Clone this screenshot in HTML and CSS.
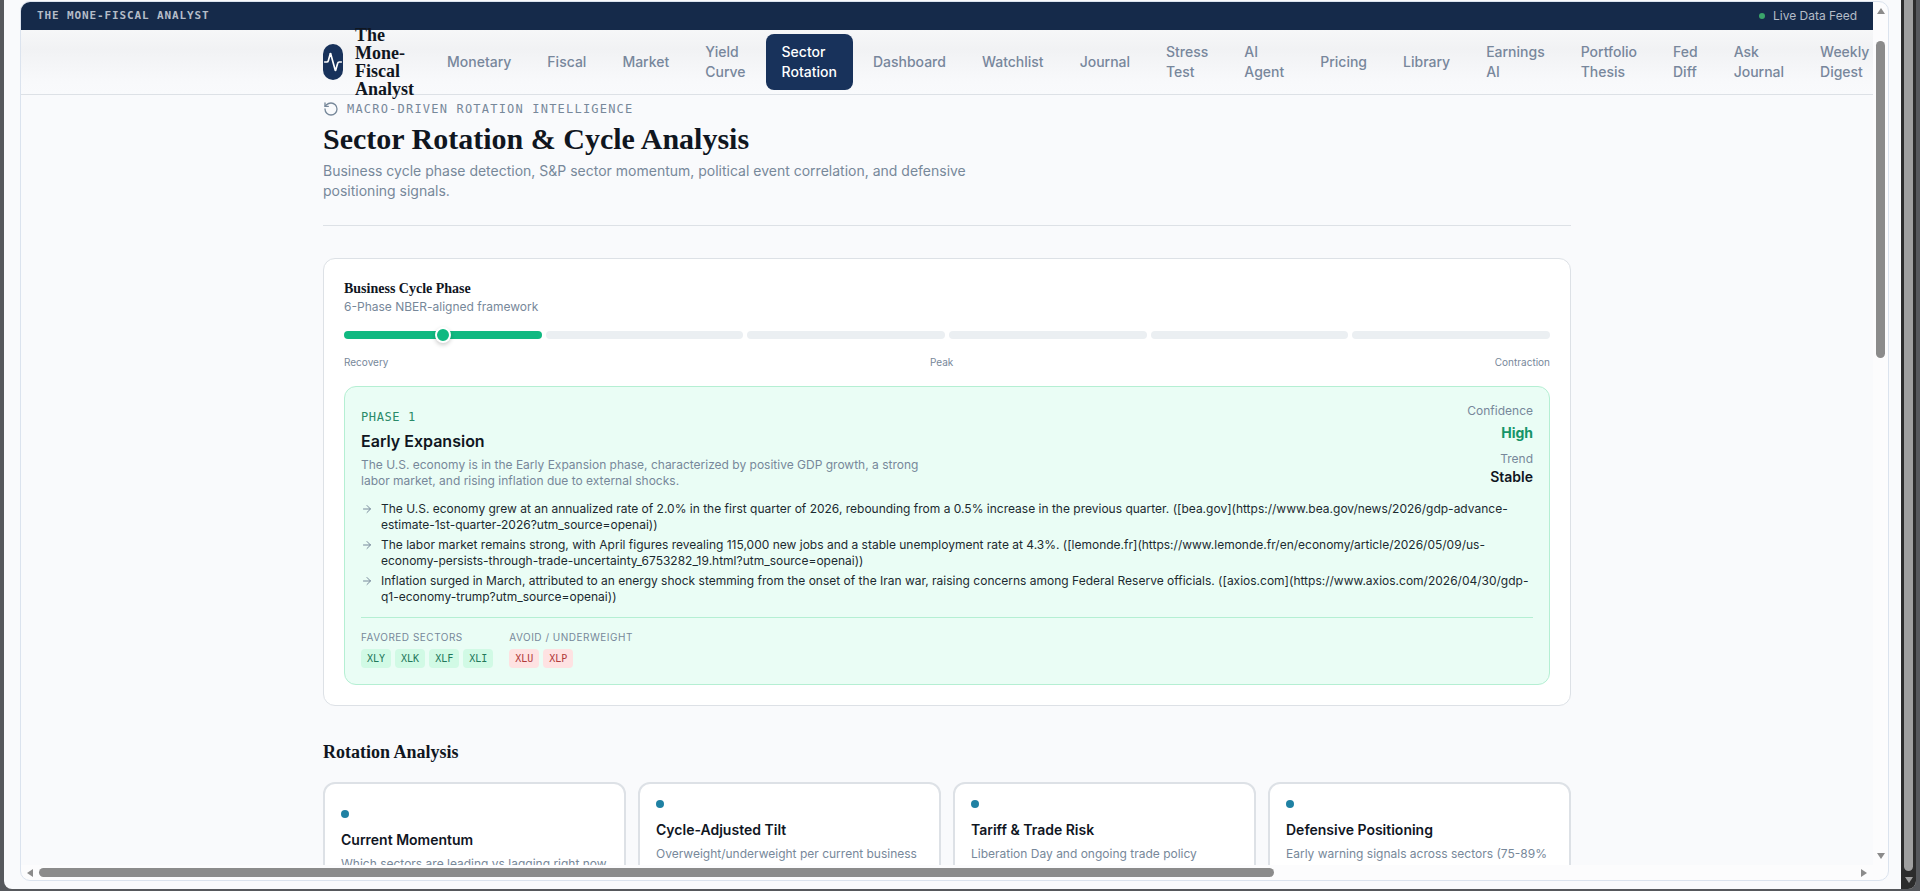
FILE: index.html
```html
<!DOCTYPE html>
<html lang="en">
<head>
    <meta charset="UTF-8">
    <meta name="viewport" content="width=device-width, initial-scale=1.0">
    <title>Sector Rotation - The Mone-Fiscal Analyst</title>
    <link rel="stylesheet" href="styles.css">
</head>
<body>
    <div class="window">
        <div class="frame">
            <div class="view">
                <div class="topbar">
                    <span class="topbar-name">THE MONE-FISCAL ANALYST</span>
                    <span class="live"><i class="live-dot"></i>Live Data Feed</span>
                </div>

                <header class="header">
                    <div class="header-inner">
                        <a href="#" class="brand">
                            <span class="logo">
                                <svg viewBox="0 0 24 24" width="20" height="20" fill="none" stroke="#fff" stroke-width="2" stroke-linecap="round" stroke-linejoin="round"><path d="M22 12h-2.5a2 2 0 0 0-1.9 1.5l-2.4 8.3a.25.25 0 0 1-.5 0L9.200 2.200a.25.25 0 0 0-.5 0l-2.300 8.300A2 2 0 0 1 4.500 12H2"/></svg>
                            </span>
                            <span class="brand-name">The Mone-Fiscal Analyst</span>
                        </a>
                        <nav class="nav">
                            <a href="#">Monetary</a>
                            <a href="#">Fiscal</a>
                            <a href="#">Market</a>
                            <a href="#">Yield Curve</a>
                            <a href="#" class="active">Sector Rotation</a>
                            <a href="#">Dashboard</a>
                            <a href="#">Watchlist</a>
                            <a href="#">Journal</a>
                            <a href="#">Stress Test</a>
                            <a href="#">AI Agent</a>
                            <a href="#">Pricing</a>
                            <a href="#">Library</a>
                            <a href="#">Earnings AI</a>
                            <a href="#">Portfolio Thesis</a>
                            <a href="#">Fed Diff</a>
                            <a href="#">Ask Journal</a>
                            <a href="#">Weekly Digest</a>
                        </nav>
                    </div>
                </header>

                <main class="container">
                    <section class="intro">
                        <div class="eyebrow">
                            <svg viewBox="0 0 24 24" width="16" height="16" fill="none" stroke="currentColor" stroke-width="2" stroke-linecap="round" stroke-linejoin="round"><path d="M3 12a9 9 0 1 0 9-9 9.750 9.750 0 0 0-6.740 2.740L3 8"/><path d="M3 3v5h5"/></svg>
                            <span>MACRO-DRIVEN ROTATION INTELLIGENCE</span>
                        </div>
                        <h1>Sector Rotation &amp; Cycle Analysis</h1>
                        <p>Business cycle phase detection, S&amp;P sector momentum, political event correlation, and defensive positioning signals.</p>
                    </section>

                    <section class="card">
                        <h2 class="card-title">Business Cycle Phase</h2>
                        <p class="card-sub">6-Phase NBER-aligned framework</p>

                        <div class="track">
                            <div class="step on"><span class="marker"></span></div>
                            <div class="step"></div>
                            <div class="step"></div>
                            <div class="step"></div>
                            <div class="step"></div>
                            <div class="step"></div>
                        </div>
                        <div class="track-labels">
                            <span>Recovery</span>
                            <span>Peak</span>
                            <span>Contraction</span>
                        </div>

                        <div class="phase">
                            <div class="phase-head">
                                <div class="phase-info">
                                    <div class="phase-num">PHASE 1</div>
                                    <h3>Early Expansion</h3>
                                    <p>The U.S. economy is in the Early Expansion phase, characterized by positive GDP growth, a strong labor market, and rising inflation due to external shocks.</p>
                                </div>
                                <dl class="phase-stats">
                                    <dt>Confidence</dt>
                                    <dd class="high">High</dd>
                                    <dt>Trend</dt>
                                    <dd>Stable</dd>
                                </dl>
                            </div>

                            <ul class="points">
                                <li>
                                    <svg viewBox="0 0 12 12" width="12" height="16" fill="none" stroke="currentColor" stroke-linecap="round" stroke-linejoin="round"><path d="M2.500 6h7M6 2.500L9.500 6 6 9.500"/></svg>
                                    <span>The U.S. economy grew at an annualized rate of 2.0% in the first quarter of 2026, rebounding from a 0.5% increase in the previous quarter. ([bea.gov](https://www.bea.gov/news/2026/gdp-advance-estimate-1st-quarter-2026?utm_source=openai))</span>
                                </li>
                                <li>
                                    <svg viewBox="0 0 12 12" width="12" height="16" fill="none" stroke="currentColor" stroke-linecap="round" stroke-linejoin="round"><path d="M2.500 6h7M6 2.500L9.500 6 6 9.500"/></svg>
                                    <span>The labor market remains strong, with April figures revealing 115,000 new jobs and a stable unemployment rate at 4.3%. ([lemonde.fr](https://www.lemonde.fr/en/economy/article/2026/05/09/us-economy-persists-through-trade-uncertainty_6753282_19.html?utm_source=openai))</span>
                                </li>
                                <li>
                                    <svg viewBox="0 0 12 12" width="12" height="16" fill="none" stroke="currentColor" stroke-linecap="round" stroke-linejoin="round"><path d="M2.500 6h7M6 2.500L9.500 6 6 9.500"/></svg>
                                    <span>Inflation surged in March, attributed to an energy shock stemming from the onset of the Iran war, raising concerns among Federal Reserve officials. ([axios.com](https://www.axios.com/2026/04/30/gdp-q1-economy-trump?utm_source=openai))</span>
                                </li>
                            </ul>

                            <div class="sectors">
                                <div>
                                    <div class="sectors-label">FAVORED SECTORS</div>
                                    <div class="chips good">
                                        <span>XLY</span>
                                        <span>XLK</span>
                                        <span>XLF</span>
                                        <span>XLI</span>
                                    </div>
                                </div>
                                <div>
                                    <div class="sectors-label">AVOID / UNDERWEIGHT</div>
                                    <div class="chips bad">
                                        <span>XLU</span>
                                        <span>XLP</span>
                                    </div>
                                </div>
                            </div>
                        </div>
                    </section>

                    <h2 class="section-title">Rotation Analysis</h2>
                    <div class="options">
                        <button type="button" class="option">
                            <span class="dot"></span>
                            <strong>Current Momentum</strong>
                            <span class="desc">Which sectors are leading vs lagging right now</span>
                        </button>
                        <button type="button" class="option">
                            <span class="dot"></span>
                            <strong>Cycle-Adjusted Tilt</strong>
                            <span class="desc two-lines">Overweight/underweight per current business</span>
                        </button>
                        <button type="button" class="option">
                            <span class="dot"></span>
                            <strong>Tariff &amp; Trade Risk</strong>
                            <span class="desc two-lines">Liberation Day and ongoing trade policy</span>
                        </button>
                        <button type="button" class="option">
                            <span class="dot"></span>
                            <strong>Defensive Positioning</strong>
                            <span class="desc two-lines">Early warning signals across sectors (75-89%</span>
                        </button>
                    </div>
                </main>
            </div>

            <div class="vbar">
                <i class="arrow up"></i>
                <div class="vbar-track"><div class="vbar-thumb"></div></div>
                <i class="arrow down"></i>
            </div>
            <div class="hbar">
                <i class="arrow left"></i>
                <div class="hbar-track"><div class="hbar-thumb"></div></div>
                <i class="arrow right"></i>
            </div>
        </div>
        <div class="outer-bar">
            <div class="outer-thumb"></div>
            <i class="arrow down"></i>
        </div>
    </div>
</body>
</html>
```
FILE: styles.css
```css
:root {
    --navy: #152a4a;
    --navy-light: #18325b;
    --page: #f9fafc;
    --text: #10161f;
    --muted: #77889a;
    --line: #dde1e6;
    --green: #10b981;
    --sans: Inter, "Liberation Sans", sans-serif;
    --serif: "Liberation Serif", serif;
    --mono: "DejaVu Sans Mono", "Liberation Mono", monospace;
}
* {
    box-sizing: border-box;
}
body {
    margin: 0;
    height: 100vh;
    padding: 0 4px 2px;
    background: #56585c;
    font-family: var(--sans);
    font-size: 14px;
    line-height: 20px;
    color: var(--text);
    overflow: hidden;
}
h1, h2, h3, p, ul, dl, dd {
    margin: 0;
    padding: 0;
}
a {
    color: inherit;
    text-decoration: none;
}

/* window and scrollbars */
.window {
    display: flex;
    height: 100%;
    background: var(--page);
    border-radius: 0 0 8px 8px;
    overflow: hidden;
}
.frame {
    flex: 1;
    min-width: 0;
    display: grid;
    grid-template-columns: minmax(0, 1fr) 15px;
    grid-template-rows: minmax(0, 1fr) 15px;
    margin: 1px 12px 8px 16px;
    border: 1px solid #dbe3ee;
    border-radius: 10px;
    background: #fcfcfd;
    overflow: hidden;
}
.view {
    background: var(--page);
    overflow: hidden;
}
.vbar {
    display: flex;
    flex-direction: column;
    align-items: center;
    padding: 6px 0;
}
.vbar-track {
    flex: 1;
    width: 9px;
    padding: 27px 0 0;
}
.vbar-thumb {
    height: 39%;
    border-radius: 5px;
    background: #8b8b8b;
}
.hbar {
    display: flex;
    align-items: center;
    padding: 0 6px;
}
.hbar-track {
    flex: 1;
    height: 9px;
    padding: 0 6px;
}
.hbar-thumb {
    width: 68%;
    height: 9px;
    border-radius: 5px;
    background: #8b8b8b;
}
.outer-bar {
    width: 15px;
    display: flex;
    flex-direction: column;
    align-items: center;
    gap: 6px;
    padding-bottom: 6px;
    background: #2c2c2c;
}
.outer-bar .arrow {
    color: #9f9f9f;
}
.outer-thumb {
    flex: 1;
    width: 9px;
    border-radius: 0 0 5px 5px;
    background: #9f9f9f;
}
.arrow {
    color: #8b8b8b;
    border: 4px solid transparent;
}
.arrow.up {
    border-top: 0;
    border-bottom: 6px solid;
}
.arrow.down {
    border-bottom: 0;
    border-top: 6px solid;
}
.arrow.left {
    border-left: 0;
    border-right: 6px solid;
}
.arrow.right {
    border-right: 0;
    border-left: 6px solid;
}

/* top bar */
.topbar {
    display: flex;
    justify-content: space-between;
    align-items: center;
    height: 28px;
    padding: 0 16px;
    background: var(--navy);
    color: #b4bcc8;
    font-size: 12px;
}
.topbar-name {
    font-family: var(--mono);
    font-size: 11px;
    font-weight: bold;
    letter-spacing: 0.08em;
}
.live {
    display: flex;
    align-items: center;
    gap: 8px;
}
.live-dot {
    width: 6px;
    height: 6px;
    border-radius: 50%;
    background: #3aa56b;
}

/* header */
.header {
    height: 65px;
    border-bottom: 1px solid var(--line);
    background: linear-gradient(#f6f7f8, #f1f2f4 30%, #f8f9fb 80%, var(--page));
}
.header-inner {
    display: flex;
    align-items: center;
    gap: 16px;
    height: 64px;
    max-width: 1280px;
    margin: 0 auto;
    padding: 0 16px;
}
.brand {
    flex: none;
    width: 92px;
    display: flex;
    align-items: center;
    gap: 12px;
}
.logo {
    flex: none;
    width: 20px;
    height: 36px;
    display: flex;
    align-items: center;
    border-radius: 10px;
    background: var(--navy-light);
}
.brand-name {
    font-family: var(--serif);
    font-size: 18px;
    line-height: 18px;
    font-weight: bold;
}
.nav {
    flex: none;
    display: flex;
    align-items: center;
    gap: 4px;
}
.nav a {
    width: min-content;
    padding: 8px 16px;
    border-radius: 8px;
    color: #78879c;
    font-weight: 500;
}
.nav a.active {
    background: var(--navy-light);
    color: #fff;
}

/* page intro */
.container {
    max-width: 1280px;
    margin: 0 auto;
    padding: 6px 16px 32px;
}
.intro {
    padding-bottom: 24px;
    border-bottom: 1px solid var(--line);
    margin-bottom: 32px;
}
.eyebrow {
    display: flex;
    align-items: center;
    gap: 8px;
    color: var(--muted);
    font-family: var(--mono);
    font-size: 12px;
    line-height: 16px;
    letter-spacing: 0.1em;
}
.intro h1 {
    margin: 4px 0;
    font-family: var(--serif);
    font-size: 30px;
    line-height: 36px;
}
.intro p {
    max-width: 672px;
    color: var(--muted);
}

/* cycle card */
.card {
    padding: 20px;
    border: 1px solid var(--line);
    border-radius: 12px;
    background: #fff;
}
.card-title {
    font-family: var(--serif);
    font-size: 14px;
    line-height: 20px;
}
.card-sub {
    color: var(--muted);
    font-size: 12px;
    line-height: 16px;
}
.track {
    display: flex;
    gap: 4px;
    margin: 16px 0;
}
.step {
    flex: 1;
    height: 8px;
    border-radius: 4px;
    background: #ebeff2;
}
.step.on {
    display: flex;
    align-items: center;
    justify-content: center;
    background: var(--green);
}
.marker {
    flex: none;
    width: 16px;
    height: 16px;
    border: 2px solid #fff;
    border-radius: 50%;
    background: var(--green);
    box-shadow: 0 2px 4px rgba(0, 0, 0, 0.2);
}
.track-labels {
    display: flex;
    justify-content: space-between;
    margin-bottom: 16px;
    color: var(--muted);
    font-size: 10px;
    line-height: 15px;
}

.phase {
    padding: 16px;
    border: 1px solid #b5efd3;
    border-radius: 12px;
    background: #eafdf5;
}
.phase-head {
    display: flex;
    justify-content: space-between;
    margin-bottom: 12px;
    font-size: 12px;
    line-height: 16px;
}
.phase-info {
    padding-top: 6px;
}
.phase-num {
    color: #2b8a68;
    font-family: var(--mono);
    letter-spacing: 0.05em;
}
.phase-info h3 {
    margin: 4px 0;
    font-size: 16px;
    line-height: 24px;
    font-weight: 600;
}
.phase-info p {
    max-width: 576px;
    color: var(--muted);
}
.phase-stats {
    text-align: right;
}
.phase-stats dt {
    color: var(--muted);
}
.phase-stats dd {
    font-size: 14px;
    line-height: 20px;
    font-weight: 600;
}
.phase-stats .high {
    margin: 4px 0 8px;
    color: #169468;
    font-weight: 700;
}
.points {
    display: flex;
    flex-direction: column;
    gap: 4px;
    list-style: none;
    font-size: 12px;
    line-height: 16px;
    color: #1c2a30;
}
.points li {
    display: flex;
    gap: 8px;
}
.points svg {
    flex: none;
    color: #77889a;
}
.sectors {
    display: flex;
    gap: 16px;
    margin-top: 12px;
    padding-top: 12px;
    border-top: 1px solid #b5efd3;
    font-size: 10px;
    line-height: 15px;
}
.sectors-label {
    margin-bottom: 4px;
    color: var(--muted);
    letter-spacing: 0.05em;
}
.chips {
    display: flex;
    gap: 4px;
    font-family: var(--mono);
}
.chips span {
    padding: 2px 6px;
    border-radius: 4px;
}
.good span {
    background: #d1fae5;
    color: #22785b;
}
.bad span {
    background: #fee2e2;
    color: #b03a3a;
}

/* rotation options */
.section-title {
    margin: 32px 0 16px;
    font-family: var(--serif);
    font-size: 18px;
    line-height: 28px;
}
.options {
    display: grid;
    grid-template-columns: repeat(4, 1fr);
    gap: 12px;
}
.option {
    display: flex;
    flex-direction: column;
    justify-content: center;
    align-items: flex-start;
    padding: 16px;
    border: 2px solid var(--line);
    border-radius: 12px;
    background: #fff;
    font: inherit;
    color: inherit;
    text-align: left;
}
.dot {
    width: 8px;
    height: 8px;
    margin-bottom: 12px;
    border-radius: 50%;
    background: #1f81a3;
}
.option strong {
    font-weight: 600;
}
.desc {
    margin-top: 4px;
    color: var(--muted);
    font-size: 12px;
}
.two-lines {
    min-height: 40px;
}
```
